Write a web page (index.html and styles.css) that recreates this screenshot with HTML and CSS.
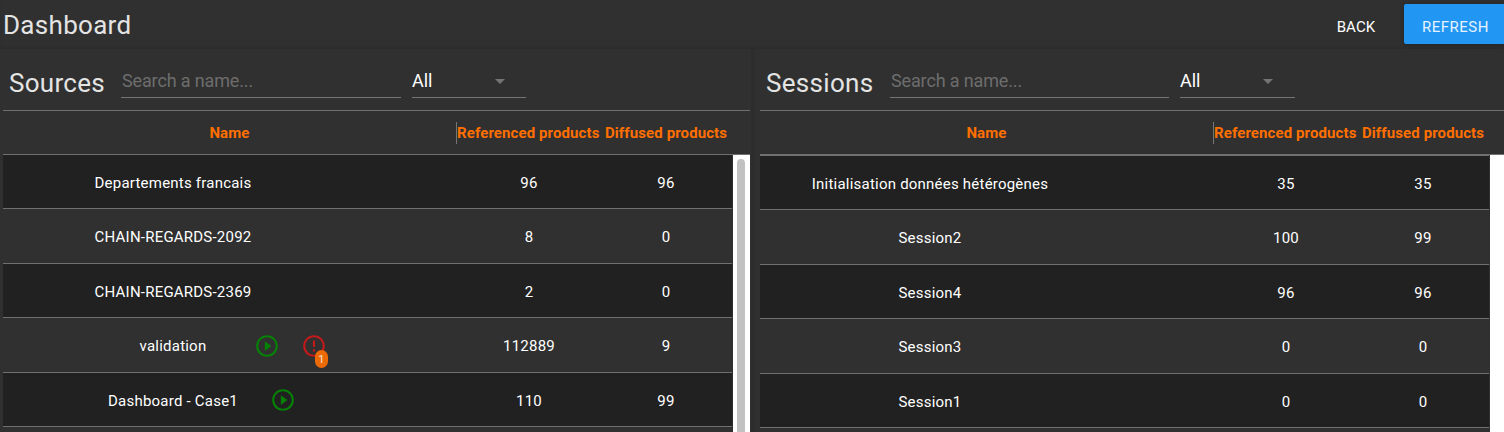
FILE: index.html
```html
<!DOCTYPE html>
<html lang="en">
<head>
<meta charset="utf-8">
<title>Dashboard</title>
<link rel="stylesheet" href="styles.css">
</head>
<body>
<svg width="0" height="0" class="defs">
  <symbol id="play" viewBox="0 0 24 24"><path d="M10 16.5l6-4.5-6-4.5v9zM12 2C6.48 2 2 6.48 2 12s4.48 10 10 10 10-4.480 10-10S17.520 2 12 2zm0 18c-4.410 0-8-3.590-8-8s3.590-8 8-8 8 3.590 8 8-3.590 8-8 8z"/></symbol>
  <symbol id="error" viewBox="0 0 24 24"><path d="M11 15h2v2h-2zm0-8h2v6h-2zm1-5C6.470 2 2 6.500 2 12s4.470 10 10 10 10-4.500 10-10S17.500 2 12 2zm0 18c-4.420 0-8-3.580-8-8s3.580-8 8-8 8 3.580 8 8-3.580 8-8 8z"/></symbol>
</svg>
<header class="topbar">
  <h1 class="title">Dashboard</h1>
  <button class="btn">BACK</button>
  <button class="btn primary">REFRESH</button>
</header>
<main class="panels">
  <section class="panel sources">
    <div class="filters">
      <h2 class="heading">Sources</h2>
      <input class="search" placeholder="Search a name...">
      <div class="select"><span>All</span><i class="arrow"></i></div>
    </div>
    <div class="row head"><div class="col">Name</div><div class="col sep">Referenced products</div><div class="col">Diffused products</div></div>
    <div class="body">
      <div class="rows">
        <div class="row dark"><div class="name"><span class="label">Departements francais</span></div><div class="col">96</div><div class="col">96</div></div>
        <div class="row"><div class="name"><span class="label">CHAIN-REGARDS-2092</span></div><div class="col">8</div><div class="col">0</div></div>
        <div class="row dark"><div class="name"><span class="label">CHAIN-REGARDS-2369</span></div><div class="col">2</div><div class="col">0</div></div>
        <div class="row"><div class="name"><span class="label">validation</span><div class="icons"><svg class="icon play"><use href="#play"/></svg><span class="alert"><svg class="icon error"><use href="#error"/></svg><b class="badge">1</b></span></div></div><div class="col">112889</div><div class="col">9</div></div>
        <div class="row dark"><div class="name"><span class="label">Dashboard - Case1</span><div class="icons near"><svg class="icon play"><use href="#play"/></svg></div></div><div class="col">110</div><div class="col">99</div></div>
      </div>
      <div class="track"><div class="thumb"></div></div>
    </div>
  </section>
  <section class="panel sessions">
    <div class="filters">
      <h2 class="heading">Sessions</h2>
      <input class="search" placeholder="Search a name...">
      <div class="select"><span>All</span><i class="arrow"></i></div>
    </div>
    <div class="row head"><div class="col">Name</div><div class="col sep">Referenced products</div><div class="col">Diffused products</div></div>
    <div class="body">
      <div class="rows">
        <div class="row dark"><div class="name"><span class="label">Initialisation données hétérogènes</span></div><div class="col">35</div><div class="col">35</div></div>
        <div class="row"><div class="name"><span class="label">Session2</span></div><div class="col">100</div><div class="col">99</div></div>
        <div class="row dark"><div class="name"><span class="label">Session4</span></div><div class="col">96</div><div class="col">96</div></div>
        <div class="row"><div class="name"><span class="label">Session3</span></div><div class="col">0</div><div class="col">0</div></div>
        <div class="row dark"><div class="name"><span class="label">Session1</span></div><div class="col">0</div><div class="col">0</div></div>
      </div>
      <div class="track"></div>
    </div>
  </section>
</main>
</body>
</html>
```
FILE: styles.css
```css
* { box-sizing: border-box; }
html, body { height: 100%; }
body {
  margin: 0;
  overflow: hidden;
  display: flex;
  flex-direction: column;
  background: #303030;
  color: #fff;
  font: 15px Roboto, sans-serif;
}
.defs { position: absolute; }
.topbar {
  height: 49px;
  flex: none;
  display: flex;
  align-items: flex-start;
  padding: 4px 0 0 3px;
  box-shadow: inset 0 -2px 2px rgba(0, 0, 0, .08);
}
.title, .heading { margin: 0; font-weight: 400; font-size: 26px; letter-spacing: .3px; color: #e4e4e4; }
.title { flex: 1; line-height: 42px; }
.btn {
  width: 96px;
  height: 40px;
  padding: 6px 0 0;
  border: 0;
  border-radius: 2px;
  background: none;
  color: #fff;
  font: 15px Roboto, sans-serif;
  letter-spacing: .1px;
}
.btn.primary {
  width: 100px;
  padding-left: 3px;
  border-radius: 2px 0 0 2px;
  background: #2196f3;
  color: #e6f3fe;
  letter-spacing: .5px;
  box-shadow: 0 1px 5px rgba(0, 0, 0, .3);
}
.panels { flex: 1; min-height: 0; display: flex; gap: 4px; background: #2d2d2d; }
.panel { flex: none; display: flex; flex-direction: column; background: #303030; }
.sources { width: 751px; padding: 0 1px 0 3px; }
.sessions { width: 749px; padding-left: 5px; }
.filters {
  height: 62px;
  flex: none;
  display: flex;
  align-items: flex-start;
  padding: 14px 0 0 6px;
  border-bottom: 1px solid #707070;
}
.heading { width: 112px; line-height: 40px; }
.sessions .heading { width: 124px; }
.search {
  width: 280px;
  height: 35px;
  padding: 1px 0 0 1px;
  border: 0;
  border-bottom: 1px solid #747474;
  border-radius: 0;
  outline: 0;
  background: none;
  color: #fff;
  font: 18px Roboto, sans-serif;
  letter-spacing: -.14px;
}
.search::placeholder { color: #6d6d6d; opacity: 1; }
.sessions .search { width: 279px; }
.select {
  width: 114px;
  height: 35px;
  margin-left: 11px;
  padding-right: 21px;
  display: flex;
  align-items: center;
  justify-content: space-between;
  border-bottom: 1px solid #747474;
  font-size: 18px;
  letter-spacing: -.1px;
}
.sessions .select { width: 115px; padding-right: 22px; }
.arrow { border: 5px solid transparent; border-top-color: #747474; border-bottom: 0; margin-top: 2px; }
.row {
  height: 54.5px;
  flex: none;
  display: grid;
  grid-template-columns: 453px 146px 130px;
  align-items: center;
  border-bottom: 1px solid #707070;
  text-align: center;
}
.rows .row { padding-top: 2.5px; letter-spacing: .22px; }
.row.dark { background: #212121; }
.row.head { height: 44px; color: #ff6f00; font-weight: 700; letter-spacing: .1px; white-space: nowrap; }
.sessions .head { grid-template-columns: 453px 146px 1fr; padding-right: 15px; }
.head .col { line-height: 22px; }
.head .col:last-child { padding-right: 2px; }
.row .sep { border-left: 1px solid #747474; text-align: left; }
.body { flex: 1; min-height: 0; display: flex; gap: 1px; overflow: hidden; }
.rows { width: 729px; flex: none; margin-top: -.4px; }
.sessions .rows { border-top: 1px solid #707070; }
.rows .col:last-child { padding-right: 2px; }
.name { display: grid; grid-template-columns: 340px; align-items: center; }
.label, .icons { grid-area: 1 / 1; }
.icons { display: flex; gap: 21px; margin-top: -1px; padding-left: 251px; }
.icons.near { padding-left: 267px; }
.icon { display: block; width: 26px; height: 26px; }
.play { fill: #058205; }
.error { fill: #c21a1a; }
.alert { position: relative; }
.badge {
  position: absolute;
  left: 14px;
  top: 17px;
  width: 13px;
  height: 18px;
  border-radius: 6.5px;
  background: #ec6a06;
  color: #f3e3d6;
  font-size: 11px;
  font-weight: 400;
  line-height: 19px;
}
.track { flex: 1; padding: 4px 5px 0 4px; background: #fff; }
.thumb { height: 400px; border-radius: 4px; background: #c1c1c1; }
```
